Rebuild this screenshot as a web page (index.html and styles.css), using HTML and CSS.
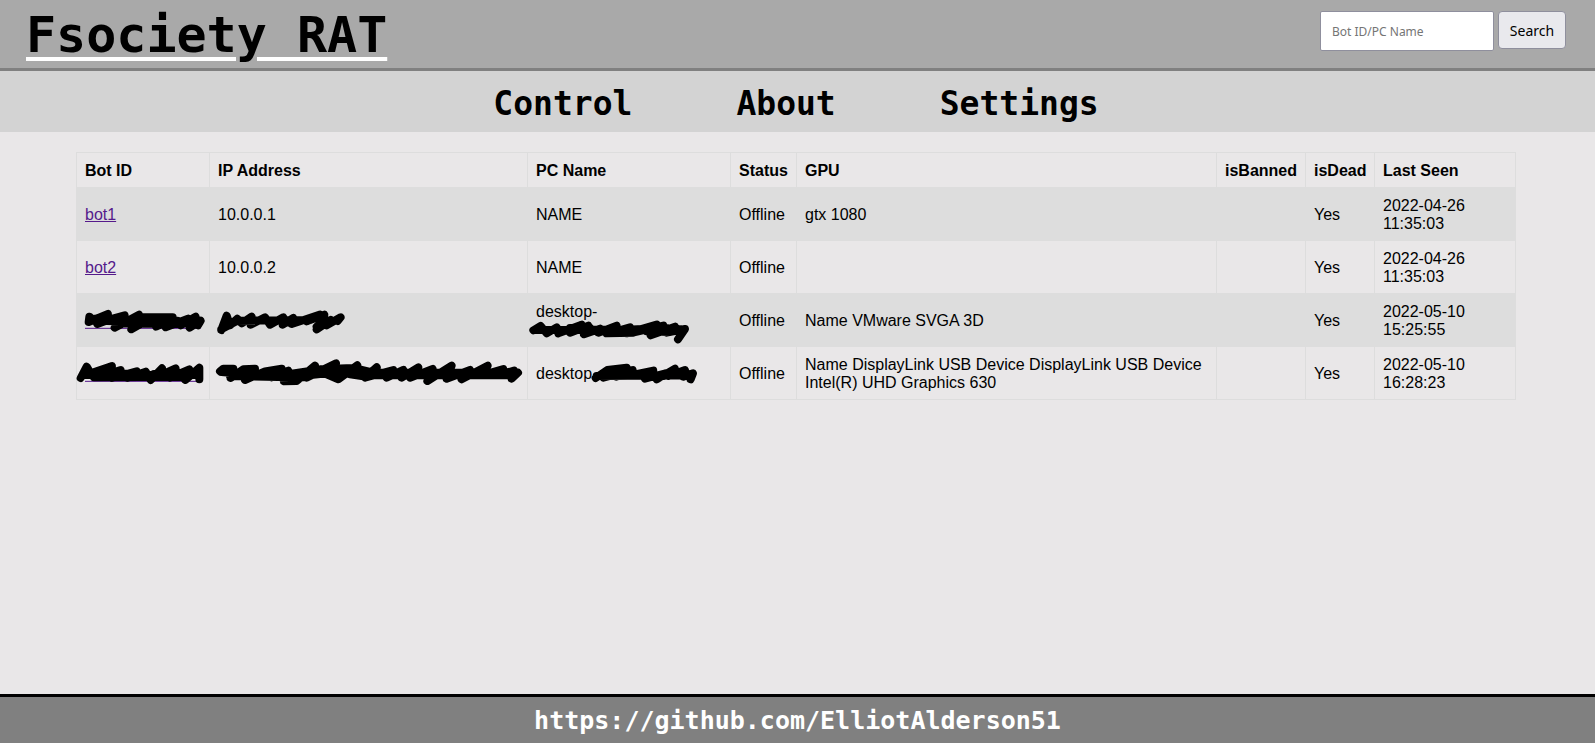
FILE: index.html
```html
<!DOCTYPE html>
<html lang="en">
<head>
<meta charset="utf-8">
<title>Fsociety RAT</title>
<link rel="stylesheet" href="styles.css">
</head>
<body>
<header class="top">
  <h1 class="brand">Fsociety RAT</h1>
  <form class="search">
    <input class="search-input" type="text" placeholder="Bot ID/PC Name" aria-label="Bot ID/PC Name">
    <button class="search-button" type="button">Search</button>
  </form>
</header>
<nav class="menu">
  <a href="#control">Control</a>
  <a href="#about">About</a>
  <a href="#settings">Settings</a>
</nav>
<main class="content">
  <table class="bots">
    <colgroup>
      <col class="col-id"><col class="col-ip"><col class="col-pc"><col class="col-status">
      <col><col class="col-banned"><col class="col-dead"><col class="col-seen">
    </colgroup>
    <thead>
      <tr><th>Bot ID</th><th>IP Address</th><th>PC Name</th><th>Status</th><th>GPU</th><th>isBanned</th><th>isDead</th><th>Last Seen</th></tr>
    </thead>
    <tbody>
      <tr><td><a href="#bot1">bot1</a></td><td>10.0.0.1</td><td>NAME</td><td>Offline</td><td>gtx 1080</td><td></td><td>Yes</td><td>2022-04-26<br>11:35:03</td></tr>
      <tr><td><a href="#bot2">bot2</a></td><td>10.0.0.2</td><td>NAME</td><td>Offline</td><td></td><td></td><td>Yes</td><td>2022-04-26<br>11:35:03</td></tr>
      <tr>
        <td><a href="#bot3" aria-label="Hidden bot"><svg class="mark" width="140" height="53" viewBox="6 -18 420 159"><path class="rule" d="M33 85H380"/><path d="M46 50L44 66L102 42L70 72L108 58L152 46L122 83L195 44L172 88L230 55L204 52L296 52L246 80L290 60L275 82L342 56L320 76L365 50L347 83L380 62L372 76M60 62L370 68M60 56L110 60M140 60L310 62M140 70L310 72"/></svg></a></td>
        <td><svg class="mark" width="160" height="53" viewBox="-3 -18 480 159"><path d="M34 90L50 47L60 76L82 56L95 70L125 50L122 74L165 52L180 74L220 52L218 74L250 54L245 72L330 44L290 64L343 44L320 88L362 60L350 76L392 52L383 63M34 88L82 62L300 60M320 52L350 60M320 80L345 60"/></svg></td>
        <td>desktop-<br>&nbsp;<svg class="mark" width="190" height="53" viewBox="21 -18 570 159"><path d="M40 91L62 78L80 100L110 82L115 100L185 74L150 98L205 77L192 103L240 86L235 98L290 77L275 98L330 82L320 100L410 74L345 96L430 77L392 106L465 80L440 98L495 87L474 118M50 90L480 88M150 84L210 84M250 92L440 84M260 100L340 98M380 94L450 96"/></svg></td>
        <td>Offline</td><td>Name VMware SVGA 3D</td><td></td><td>Yes</td><td>2022-05-10<br>15:25:55</td>
      </tr>
      <tr>
        <td><a href="#bot4" aria-label="Hidden bot"><svg class="mark" width="140" height="53" viewBox="6 141 420 159"><path class="rule" d="M33 244H380"/><path d="M20 234L38 200L50 220L114 198L80 228L140 210L114 234L188 214L160 234L215 215L230 240L264 205L250 230L305 205L288 233L346 208L334 240L376 203L376 238M28 225L370 224M60 232L340 230M60 218L200 222M240 222L350 222"/></svg></a></td>
        <td><svg class="mark" width="318" height="53" viewBox="-3 141 954 159"><path d="M30 214L40 206L70 206L62 234L100 208L135 206L105 240L165 214L215 206L185 232L235 212L222 244L260 243L315 197L290 233L378 190L350 223L385 238L442 196L420 223L470 230L500 202L465 233L550 210L530 233L580 210L575 233L625 202L600 233L668 207L652 243L725 197L710 236L780 210L755 238L833 197L815 226L880 207L860 226L912 212L905 236L924 218M34 216L60 218L240 222L330 208L430 204L490 218L910 218M60 228L240 232L330 222L430 218L500 226L900 226M220 236L280 232"/></svg></td>
        <td>desktop<svg class="mark" width="190" height="53" viewBox="21 141 570 159"><path d="M227 234L262 210L320 203L250 233L338 210L290 230L300 215L345 223L400 212L375 236L440 219L410 238L465 206L445 228L495 210L490 230L519 220L512 238M230 228L510 226M260 214L330 212M250 222L340 222M380 232L430 228M450 218L500 220"/></svg></td>
        <td>Offline</td><td>Name DisplayLink USB Device DisplayLink USB Device Intel(R) UHD Graphics 630</td><td></td><td>Yes</td><td>2022-05-10<br>16:28:23</td>
      </tr>
    </tbody>
  </table>
</main>
<footer class="foot"><a href="https://github.com/ElliotAlderson51">https://github.com/ElliotAlderson51</a></footer>
</body>
</html>
```

FILE: styles.css
```css
* {
  box-sizing: border-box;
}

body {
  display: flex;
  flex-direction: column;
  min-height: 100vh;
  margin: 0;
  background: #e9e7e8;
  color: #000;
  font: 16px/18px "Liberation Sans", Arial, sans-serif;
}

.top {
  display: flex;
  justify-content: space-between;
  align-items: flex-start;
  padding: 0 29px 0 26px;
  background: #a9a9a9;
  border-bottom: 3px solid #808080;
}

.brand {
  margin: 0;
  padding-top: 2px;
  font: bold 50px/66px "DejaVu Sans Mono", monospace;
  text-decoration: underline 4px #fff;
  text-underline-offset: 5px;
}

.search {
  display: flex;
  align-items: flex-start;
  gap: 4px;
  padding-top: 11px;
}

.search-input,
.search-button {
  border: 1px solid #8f8f9d;
  color: #000;
  font-family: "Noto Sans", sans-serif;
}

.search-input {
  width: 174px;
  height: 40px;
  padding: 0 11px;
  border-radius: 2px;
  background: #fff;
  font-size: 12px;
}

.search-input::placeholder {
  color: #757575;
}

.search-button {
  width: 68px;
  height: 38px;
  padding: 0;
  border-radius: 4px;
  background: #e9e9ed;
  font-size: 14px;
}

.menu {
  display: flex;
  justify-content: center;
  gap: 104px;
  padding: 4px 3px 0 0;
  background: #d3d3d3;
  font: bold 33px/57px "DejaVu Sans Mono", monospace;
}

.menu a {
  color: #000;
  text-decoration: none;
}

.content {
  flex: 1;
  padding: 20px 79px 20px 76px;
}

.bots {
  width: 100%;
  table-layout: fixed;
  border-collapse: collapse;
}

.bots th,
.bots td {
  position: relative;
  padding: 9px 8px 7px;
  border: 1px solid #ddd;
  text-align: left;
}

.bots tbody tr:nth-child(odd) {
  background: #ddd;
}

.bots a {
  color: #551a8b;
}

.col-id { width: 133px; }
.col-ip { width: 318px; }
.col-pc { width: 203px; }
.col-status { width: 66px; }
.col-banned { width: 89px; }
.col-dead { width: 69px; }
.col-seen { width: 141px; }

.mark {
  position: absolute;
  top: 0;
  left: -1px;
  overflow: visible;
  fill: none;
  stroke: #000;
  stroke-width: 24;
  stroke-linecap: round;
  stroke-linejoin: round;
  pointer-events: none;
}

.mark .rule {
  stroke: #551a8b;
  stroke-width: 3;
  stroke-linecap: butt;
}

.foot {
  padding-top: 2px;
  background: #808080;
  border-top: 3px solid #000;
  font: bold 25px/44px "DejaVu Sans Mono", monospace;
  text-align: center;
}

.foot a {
  color: #fff;
  text-decoration: none;
}
```
